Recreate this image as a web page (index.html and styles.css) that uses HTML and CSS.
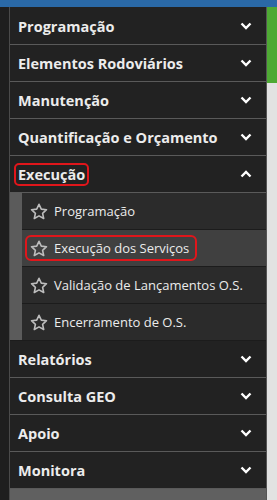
FILE: index.html
```html
<!DOCTYPE html>
<html lang="pt">
<head>
<meta charset="utf-8">
<title>Menu</title>
<link rel="stylesheet" href="styles.css">
</head>
<body>
<div class="topbar"></div>
<div class="layout">
  <div class="gutter"></div>
  <nav class="menu">
    <div class="head"><span class="label">Programação</span><svg class="chev" viewBox="0 0 12 8" width="12" height="8"><path d="M1.5 1.5 L6 6 L10.5 1.5"/></svg></div>
    <div class="head"><span class="label">Elementos Rodoviários</span><svg class="chev" viewBox="0 0 12 8" width="12" height="8"><path d="M1.5 1.5 L6 6 L10.5 1.5"/></svg></div>
    <div class="head"><span class="label">Manutenção</span><svg class="chev" viewBox="0 0 12 8" width="12" height="8"><path d="M1.5 1.5 L6 6 L10.5 1.5"/></svg></div>
    <div class="head"><span class="label">Quantificação e Orçamento</span><svg class="chev" viewBox="0 0 12 8" width="12" height="8"><path d="M1.5 1.5 L6 6 L10.5 1.5"/></svg></div>
    <div class="head"><span class="label mark">Execução</span><svg class="chev" viewBox="0 0 12 8" width="12" height="8"><path d="M1.5 6.5 L6 2 L10.5 6.5"/></svg></div>
    <div class="sub">
      <div class="strip"></div>
      <ul class="items">
        <li class="item"><span class="entry"><svg class="star" viewBox="0 0 18 17" width="18" height="17"><path d="M9 1.3 L11.3 6.1 L16.5 6.7 L12.6 10.3 L13.7 15.5 L9 12.9 L4.3 15.5 L5.4 10.3 L1.5 6.7 L6.7 6.1 Z"/></svg>Programação</span></li>
        <li class="item active"><span class="entry mark2"><svg class="star" viewBox="0 0 18 17" width="18" height="17"><path d="M9 1.3 L11.3 6.1 L16.5 6.7 L12.6 10.3 L13.7 15.5 L9 12.9 L4.3 15.5 L5.4 10.3 L1.5 6.7 L6.7 6.1 Z"/></svg>Execução dos Serviços</span></li>
        <li class="item"><span class="entry"><svg class="star" viewBox="0 0 18 17" width="18" height="17"><path d="M9 1.3 L11.3 6.1 L16.5 6.7 L12.6 10.3 L13.7 15.5 L9 12.9 L4.3 15.5 L5.4 10.3 L1.5 6.7 L6.7 6.1 Z"/></svg>Validação de Lançamentos O.S.</span></li>
        <li class="item"><span class="entry"><svg class="star" viewBox="0 0 18 17" width="18" height="17"><path d="M9 1.3 L11.3 6.1 L16.5 6.7 L12.6 10.3 L13.7 15.5 L9 12.9 L4.3 15.5 L5.4 10.3 L1.5 6.7 L6.7 6.1 Z"/></svg>Encerramento de O.S.</span></li>
      </ul>
    </div>
    <div class="head"><span class="label">Relatórios</span><svg class="chev" viewBox="0 0 12 8" width="12" height="8"><path d="M1.5 1.5 L6 6 L10.5 1.5"/></svg></div>
    <div class="head"><span class="label">Consulta GEO</span><svg class="chev" viewBox="0 0 12 8" width="12" height="8"><path d="M1.5 1.5 L6 6 L10.5 1.5"/></svg></div>
    <div class="head"><span class="label">Apoio</span><svg class="chev" viewBox="0 0 12 8" width="12" height="8"><path d="M1.5 1.5 L6 6 L10.5 1.5"/></svg></div>
    <div class="head"><span class="label">Monitora</span><svg class="chev" viewBox="0 0 12 8" width="12" height="8"><path d="M1.5 1.5 L6 6 L10.5 1.5"/></svg></div>
    <div class="filler"></div>
  </nav>
  <aside class="side"><div class="green"></div></aside>
</div>
</body>
</html>
```

FILE: styles.css
```css
* { box-sizing: border-box; }
html, body { margin: 0; padding: 0; }
body {
  width: 277px;
  height: 500px;
  overflow: hidden;
  background: #1e1e1e;
  font-family: "Open Sans", "DejaVu Sans", sans-serif;
  display: flex;
  flex-direction: column;
}
.topbar {
  height: 7px;
  background: #2a69a7;
  flex: none;
}
.layout {
  flex: 1;
  display: flex;
  min-height: 0;
}
.gutter {
  width: 9px;
  background: #1e1e1e;
  flex: none;
}
.menu {
  width: 258px;
  flex: none;
  display: flex;
  flex-direction: column;
  background: #222222;
  border-left: 1px solid #4a4a4a;
  border-right: 1px solid #555555;
  padding-top: 1px;
}
.head {
  height: 37px;
  flex: none;
  display: flex;
  align-items: center;
  justify-content: space-between;
  padding: 0 14px 0 8px;
  border-bottom: 1px solid #5a5a5a;
  background: #222222;
}
.label {
  color: #ececec;
  font-weight: 700;
  font-size: 14.5px;
  letter-spacing: 0;
  line-height: 19px;
}
.mark {
  margin-left: -4px;
  padding: 0 2px;
  border: 2px solid #e0161b;
  border-radius: 5px;
}
.chev {
  fill: none;
  stroke: #ffffff;
  stroke-width: 2.4;
  stroke-linecap: butt;
  stroke-linejoin: miter;
}
.sub {
  display: flex;
  flex: none;
  border-bottom: 1px solid #1c1c1c;
}
.strip {
  width: 12px;
  flex: none;
  background: #5b5b5b;
}
.items {
  flex: 1;
  list-style: none;
  margin: 0;
  padding: 0;
}
.item {
  height: 37px;
  display: flex;
  align-items: center;
  padding-left: 8px;
  background: #2b2b2b;
  border-bottom: 1px solid #1c1c1c;
}
.item:last-child { border-bottom: none; height: 36px; }
.item.active { background: #404040; }
.entry {
  display: flex;
  align-items: center;
  color: #ececec;
  font-size: 13px;
  line-height: 18px;
}
.star {
  fill: none;
  stroke: #bdbdbd;
  stroke-width: 1.6;
  stroke-linejoin: round;
  margin-right: 6px;
  flex: none;
}
.mark2 {
  margin-left: -5px;
  padding: 2px 6px 2px 3px;
  border: 2px solid #e0161b;
  border-radius: 6px;
}
.filler {
  flex: 1;
  background: #606060;
}
.side {
  flex: 1;
  background: #e2e2e2;
}
.green {
  height: 76px;
  background: #4ea934;
}
```
